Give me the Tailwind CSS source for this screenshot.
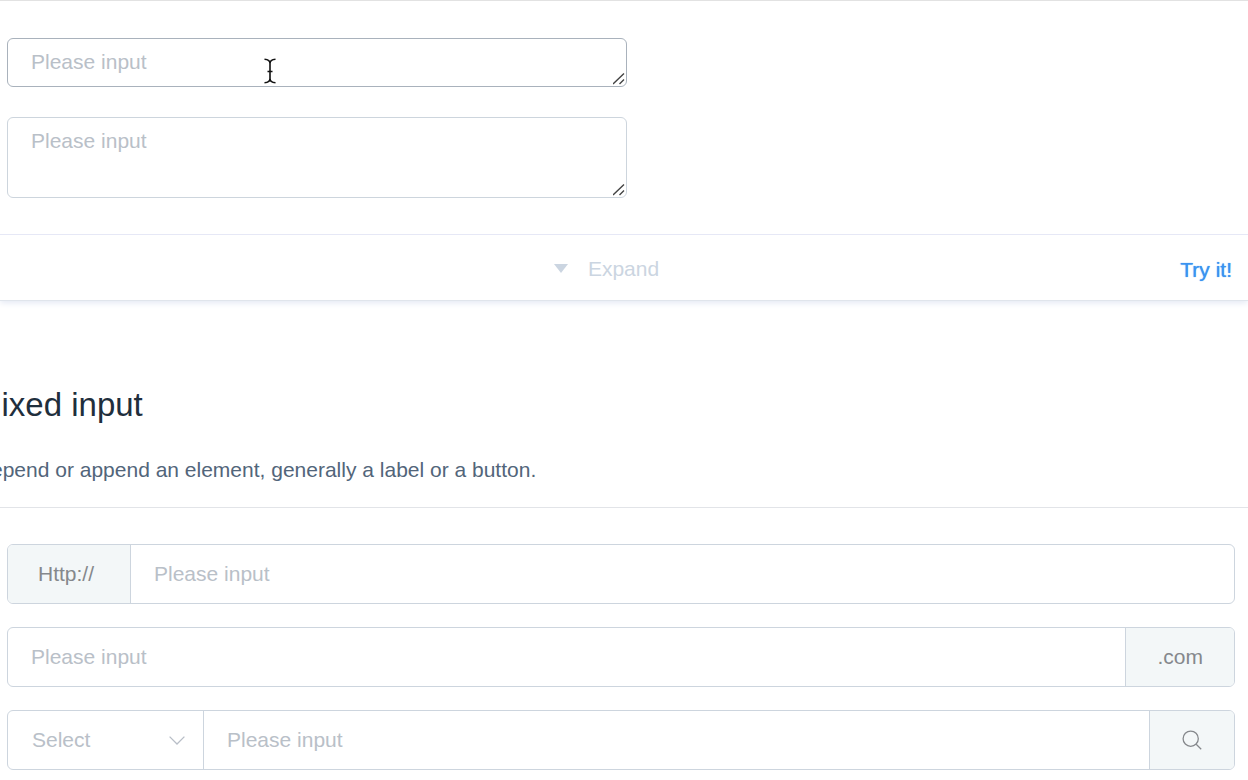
<!DOCTYPE html>
<html lang="en">
<head>
<meta charset="utf-8">
<meta name="viewport" content="width=device-width, initial-scale=1">
<title>Input</title>
<script src="https://cdn.jsdelivr.net/npm/@tailwindcss/browser@4"></script>
</head>
<body class="overflow-hidden bg-white font-['Liberation_Sans',Arial,sans-serif] text-[21px] leading-6 text-[#52657a]">
<main>
  <section aria-label="Autosize textarea" class="border-t border-[#e2e2e2] shadow-[0_2px_6px_#e4e9f4]">
    <div class="flex max-w-[627px] flex-col gap-[30px] pt-[37px] pb-9 pl-[7px]">
      <div class="relative flex">
        <textarea aria-label="Autosize input" rows="1" placeholder="Please input" class="block h-[49px] w-full resize-none overflow-hidden rounded-md border border-[#a9b2bc] px-[23px] py-[11px] outline-none placeholder:text-[#b9c0c8]"></textarea>
        <svg class="pointer-events-none absolute right-0.5 bottom-0.5 size-3" viewBox="0 0 12 12" fill="none" stroke="#444" stroke-width="1.4" aria-hidden="true"><path d="M0 11 11 .5M6.500 11l4.500-4.500"/></svg>
        <svg class="pointer-events-none absolute top-5 left-[257px] h-[26px] w-3" viewBox="0 0 12 26" fill="none" stroke="#111" stroke-width="1.6" aria-hidden="true"><path d="M.5 1.200C4 1.500 6 3 6 5.500v15c0 2.500-2 4-5.500 4.300M11.500 1.200C8 1.500 6 3 6 5.500M6 20.500c0 2.500 2 4 5.500 4.300M3.500 13.500h5"/></svg>
      </div>
      <div class="relative flex">
        <textarea aria-label="Autosize input with minimum rows" rows="2" placeholder="Please input" class="block h-[81px] w-full resize-none overflow-hidden rounded-md border border-[#cdd5dd] px-[23px] py-[11px] outline-none placeholder:text-[#b9c0c8]"></textarea>
        <svg class="pointer-events-none absolute right-0.5 bottom-0.5 size-3" viewBox="0 0 12 12" fill="none" stroke="#444" stroke-width="1.4" aria-hidden="true"><path d="M0 11 11 .5M6.500 11l4.500-4.500"/></svg>
      </div>
    </div>
    <div class="grid h-[67px] grid-cols-[1fr_auto_1fr] items-center border-t border-b border-t-[#e6e8f6] border-b-[#e0e5ec]">
      <button type="button" class="col-start-2 mr-[35px] flex items-center gap-5 pt-0.5 text-[#cbd5e1]">
        <svg class="h-[9px] w-[14px]" viewBox="0 0 14 9" fill="currentColor" aria-hidden="true"><path d="M0 0h14L7 9z"/></svg>
        <span>Expand</span>
      </button>
      <a href="#" class="mr-4 justify-self-end pt-1 text-[#3a93f0] text-shadow-[0_0_1px_#3a93f0]">Try it!</a>
    </div>
  </section>

  <section class="pt-[84px]">
    <h2 class="-ml-[26px] text-[33px] leading-10 text-[#1f2f3d]">Mixed input</h2>
    <p class="mt-[33px] -ml-[30px] whitespace-nowrap">Prepend or append an element, generally a label or a button.</p>
    <div class="mt-[25px] flex flex-col gap-[23px] border-t border-[#e2e4e8] pt-9 pr-[13px] pl-[7px]">
      <div class="flex h-[60px] overflow-hidden rounded-md border border-[#cdd5de]">
        <label for="url" class="flex w-[123px] items-center border-r border-[#cdd5de] bg-[#f3f7f8] pl-[30px] text-[#85888c]">Http://</label>
        <input id="url" type="text" placeholder="Please input" class="min-w-0 flex-1 px-[23px] outline-none placeholder:text-[#b9c0c8]">
      </div>
      <div class="flex h-[60px] overflow-hidden rounded-md border border-[#cdd5de]">
        <input id="domain" type="text" placeholder="Please input" class="min-w-0 flex-1 px-[23px] outline-none placeholder:text-[#b9c0c8]">
        <label for="domain" class="flex items-center border-l border-[#cdd5de] bg-[#f3f7f8] px-[31px] text-[#85888c]">.com</label>
      </div>
      <div class="flex h-[60px] overflow-hidden rounded-md border border-[#cdd5de]">
        <div class="relative flex w-[196px] border-r border-[#cdd5de]">
          <select aria-label="Select" class="w-full appearance-none pl-6 text-[#b9c0c8] outline-none">
            <option>Select</option>
          </select>
          <svg class="pointer-events-none absolute top-[25px] right-[18px] h-[9px] w-4" viewBox="0 0 16 9" fill="none" stroke="#b8bec7" stroke-width="1.3" aria-hidden="true"><path d="m.6.6 7.400 7.400L15.400.6"/></svg>
        </div>
        <input type="text" aria-label="Search text" placeholder="Please input" class="min-w-0 flex-1 px-[23px] outline-none placeholder:text-[#b9c0c8]">
        <button type="button" aria-label="Search" class="flex w-[85px] items-center justify-center border-l border-[#cdd5de] bg-[#f3f7f8]">
          <svg class="size-5" viewBox="0 0 20 20" fill="none" stroke="#85888c" stroke-width="1.300" aria-hidden="true"><circle cx="8.700" cy="8.700" r="7.600"/><path d="m14.200 14.200 5 5"/></svg>
        </button>
      </div>
    </div>
  </section>
</main>
</body>
</html>
